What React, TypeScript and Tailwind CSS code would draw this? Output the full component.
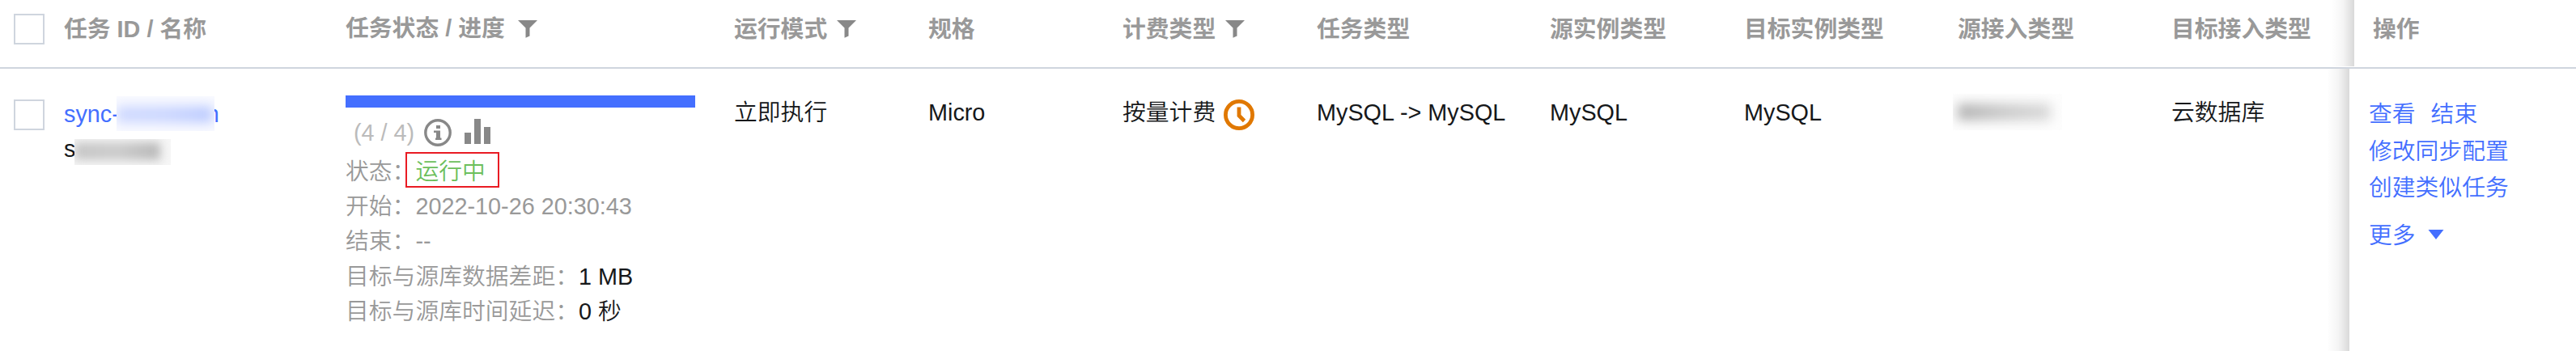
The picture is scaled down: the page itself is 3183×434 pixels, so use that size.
import type { ReactNode } from "react";
import { clsx } from "clsx";

const ROW_GRID =
  "grid grid-cols-[79px_348px_480px_240px_240px_240px_288px_240px_264px_264px_1fr]";

type Column = {
  title: string;
  filter?: string;
  raised?: boolean;
};

const columns: Column[] = [
  { title: "任务 ID / 名称" },
  { title: "任务状态 / 进度", filter: "ml-[16px]", raised: true },
  { title: "运行模式", filter: "ml-[12px]" },
  { title: "规格" },
  { title: "计费类型", filter: "ml-[12px]" },
  { title: "任务类型" },
  { title: "源实例类型" },
  { title: "目标实例类型" },
  { title: "源接入类型" },
  { title: "目标接入类型" },
];

export default function App() {
  return (
    <div className="h-[434px] w-[3183px] overflow-hidden bg-white font-['Liberation_Sans','Noto_Sans_CJK_SC',sans-serif] text-[28.8px] leading-[43.2px] whitespace-nowrap text-[#16181a]">
      <TableHeader />
      <TaskRow />
    </div>
  );
}

function TableHeader() {
  return (
    <div className="flex h-[85px] border-b-2 border-[#cfd5de] font-bold text-[#999]">
      <div className={clsx(ROW_GRID, "w-[2909px] pt-[15px]")}>
        <Checkbox className="mt-[2px]" />
        {columns.map((column) => (
          <div
            key={column.title}
            className={clsx("flex items-start", column.raised && "-mt-px")}
          >
            <span>{column.title}</span>
            {column.filter ? (
              <FilterIcon
                className={clsx(
                  column.filter,
                  column.raised ? "mt-[11px]" : "mt-[10px]",
                )}
              />
            ) : null}
          </div>
        ))}
      </div>
      <FixedPane className="mb-px pt-[15px] pl-[23px]">操作</FixedPane>
    </div>
  );
}

function TaskRow() {
  return (
    <div className="flex h-[349px] font-[350]">
      <div className={clsx(ROW_GRID, "w-[2903px] pt-[33px]")}>
        <Checkbox className="mt-[5px]" />
        <TaskName />
        <TaskProgress />
        <div>立即执行</div>
        <div>Micro</div>
        <div className="flex items-start">
          <span>按量计费</span>
          <ClockIcon className="mt-[5px] ml-[10px]" />
        </div>
        <div>MySQL -&gt; MySQL</div>
        <div>MySQL</div>
        <div>MySQL</div>
        <div className="mt-[-2px] -ml-[6px] h-[45px] w-[135px] overflow-hidden bg-[#fdfdfd] pt-[12px] pl-[6px]">
          <div className="h-[21px] w-[115px] bg-linear-to-r from-[#b4b4b4] via-[#cbcbcb] to-[#dadada] blur-[7px]" />
        </div>
        <div>云数据库</div>
      </div>
      <FixedPane className="pt-[35px] pl-[24px] text-[#446fff]">
        <div className="flex gap-[19px]">
          <a>查看</a>
          <a>结束</a>
        </div>
        <a className="mt-[3px] block">修改同步配置</a>
        <a className="mt-[2px] block">创建类似任务</a>
        <a className="mt-[15px] flex items-start gap-[15px]">
          更多
          <svg className="mt-[14px] h-[12px] w-[20px]" viewBox="0 0 20 12">
            <path d="M0.5 0h19L10 12z" fill="currentColor" />
          </svg>
        </a>
      </FixedPane>
    </div>
  );
}

function TaskName() {
  return (
    <div className="pt-[2px]">
      <div className="relative flex text-[#446fff]">
        <span>sync-</span>
        <span className="ml-[107px]">n</span>
        <div className="absolute top-[-1px] left-[65px] h-[43px] w-[121px] overflow-hidden bg-[#f9faff] pt-[12px]">
          <div className="h-[21px] w-[119px] bg-linear-to-r from-[#cfd9ff] via-[#cbd6ff] to-[#bccbff] blur-[7px]" />
        </div>
      </div>
      <div className="relative flex">
        <span>s</span>
        <div className="absolute top-[9px] left-[13px] h-[32px] w-[119px] overflow-hidden bg-[#f6f6f6] pt-[4px]">
          <div className="h-[22px] w-[106px] bg-linear-to-r from-[#c6c6c6] via-[#cbcbcb] to-[#b8b8b8] blur-[6px]" />
        </div>
      </div>
    </div>
  );
}

function TaskProgress() {
  return (
    <div className="text-[#999]">
      <div className="h-[15px] w-[432px] bg-[#446fff]" />
      <div className="flex h-[58px] pt-[10px] pl-[10px]">
        <span className="w-[87px] text-[#bbb]">(4 / 4)</span>
        <InfoIcon className="mt-[4px]" />
        <ChartIcon className="mt-[4px] ml-[16px]" />
      </div>
      <div className="flex">
        <span className="w-[74px]">状态：</span>
        <span className="mt-[-3px] h-[44px] w-[116px] border-2 border-[#e91b23] pt-px pl-[10.4px] text-[#6cbf5c]">
          运行中
        </span>
      </div>
      <StatusLine label="开始：">2022-10-26 20:30:43</StatusLine>
      <StatusLine label="结束：">--</StatusLine>
      <StatusLine label="目标与源库数据差距：">
        <span className="text-[#16181a]">1 MB</span>
      </StatusLine>
      <StatusLine label="目标与源库时间延迟：">
        <span className="text-[#16181a]">0 秒</span>
      </StatusLine>
    </div>
  );
}

function StatusLine({
  label,
  children,
}: {
  label: string;
  children: ReactNode;
}) {
  return (
    <div>
      {label}
      {children}
    </div>
  );
}

function FixedPane({
  className,
  children,
}: {
  className?: string;
  children: ReactNode;
}) {
  return (
    <div className={clsx("relative flex-1 bg-white", className)}>
      <div className="absolute inset-y-0 right-full w-[28px] bg-linear-to-r from-transparent via-black/4 to-black/15" />
      {children}
    </div>
  );
}

function Checkbox({ className }: { className?: string }) {
  return (
    <div
      className={clsx(
        "ml-[17px] h-[38px] w-[38px] border-2 border-[#cfd5de] bg-white",
        className,
      )}
    />
  );
}

function FilterIcon({ className }: { className?: string }) {
  return (
    <svg className={clsx("h-[22px] w-[24px]", className)} viewBox="0 0 24 22">
      <path d="M0 0h24l-9.5 9.5v10l-5 2.2V9.5z" fill="#888" />
    </svg>
  );
}

function InfoIcon({ className }: { className?: string }) {
  return (
    <svg className={clsx("h-[34px] w-[34px]", className)} viewBox="0 0 34 34">
      <circle cx="17" cy="17" r="15.2" fill="none" stroke="#888" strokeWidth="3.4" />
      <path d="M15 8h5v4h-5zM12 14.5h8v9h1.5V26H14v-2.5h1V17h-3z" fill="#888" />
    </svg>
  );
}

function ChartIcon({ className }: { className?: string }) {
  return (
    <svg className={clsx("h-[32px] w-[32px]", className)} viewBox="0 0 32 32">
      <path d="M0 17h8v14H0zM12 0h8v31h-8zM24 10h8v21h-8z" fill="#888" />
    </svg>
  );
}

function ClockIcon({ className }: { className?: string }) {
  return (
    <svg className={clsx("h-[38px] w-[38px]", className)} viewBox="0 0 38 38">
      <circle cx="19" cy="19" r="16.6" fill="none" stroke="#e07800" strokeWidth="4.8" />
      <path d="M19 9.5v10.5l6.5 6.5" fill="none" stroke="#e07800" strokeWidth="4.8" />
    </svg>
  );
}
